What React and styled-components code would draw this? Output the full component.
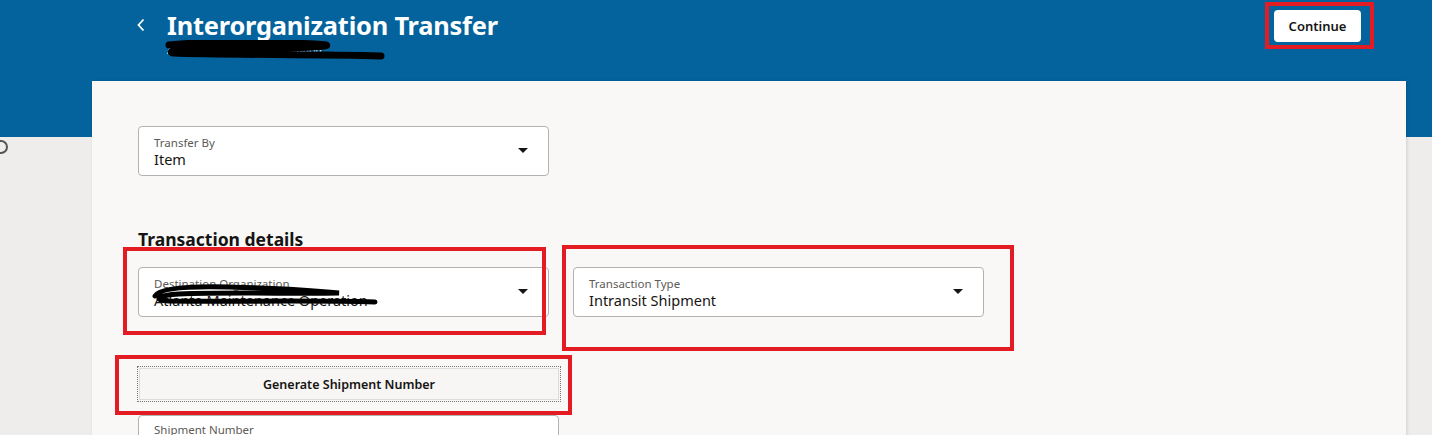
import React from 'react';
import styled, {createGlobalStyle} from 'styled-components';

const GlobalStyle = createGlobalStyle`
  body {
    margin: 0;
    background: #eeedeb;
    font-family: "Noto Sans", "Open Sans", Arial, sans-serif;
    overflow: hidden;
  }
`;

//<editor-fold desc="Styled Components">
const Page = styled.div`
  position: relative;
  width: 1432px;
  height: 435px;
  overflow: hidden;
`;
const Header = styled.header`
  background: #04639c;
  height: 137px;
  display: flex;
  justify-content: space-between;
  align-items: flex-start;
  padding: 10px 71px 0 136px;
  box-sizing: border-box;
`;
const TitleBlock = styled.div`
  display: flex;
  flex-direction: column;
  margin-top: -2px;
`;
const TitleRow = styled.div`
  display: flex;
  align-items: center;
  gap: 18px;
`;
const BackBtn = styled.button`
  background: none;
  border: none;
  padding: 0;
  width: 13px;
  height: 20px;
  display: flex;
  align-items: center;
  cursor: pointer;
`;
const Title = styled.h1`
  margin: 0;
  color: #fff;
  font-size: 25.4px;
  font-weight: 700;
  letter-spacing: -0.2px;
  line-height: 34px;
`;
const Subtitle = styled.div`
  position: relative;
  margin-left: 31px;
  color: #fff;
  font-size: 10.5px;
  line-height: 16px;
  height: 18px;
  width: 220px;
`;
const Scribble = styled.svg`
  position: absolute;
  left: ${p => p.$left || 0}px;
  top: ${p => p.$top || 0}px;
  pointer-events: none;
`;
const Highlight = styled.div`
  position: relative;
  width: fit-content;
  &::after {
    content: "";
    position: absolute;
    top: ${p => p.$t}px;
    left: ${p => p.$l}px;
    right: ${p => p.$r}px;
    bottom: ${p => p.$b}px;
    border: 4px solid #e31c24;
    pointer-events: none;
  }
`;
const ContinueBtn = styled.button`
  display: block;
  width: 87px;
  height: 32px;
  background: #fff;
  border: none;
  border-radius: 4px;
  font-family: inherit;
  font-size: 13px;
  font-weight: 600;
  color: #161513;
`;
const Ring = styled.div`
  position: absolute;
  left: -6px;
  top: 140px;
  width: 10px;
  height: 10px;
  border: 2px solid #555;
  border-radius: 50%;
`;
const Card = styled.main`
  margin: -56px 26px 0 92px;
  background: #f9f8f7;
  box-shadow: 1px 0 3px rgba(0, 0, 0, 0.12);
  padding: 45px 46px 0;
  height: 400px;
  box-sizing: border-box;
`;
const Field = styled.div`
  position: relative;
  width: ${p => p.$w || 411}px;
  height: 50px;
  box-sizing: border-box;
  background: #fff;
  border: 1px solid #b5b3b0;
  border-radius: 4px;
  padding: 8px 15px 0;
  display: flex;
  flex-direction: column;
`;
const ShipmentField = styled(Field)`
  margin-top: 13px;
  padding-top: 6px;
`;
const Label = styled.span`
  font-size: 11.5px;
  color: #5c5a57;
  line-height: 15px;
`;
const Value = styled.span`
  font-size: 14.5px;
  color: #161513;
  line-height: 18px;
`;
const Caret = styled.span`
  position: absolute;
  right: 20px;
  top: 21px;
  width: 0;
  height: 0;
  border-left: 5px solid transparent;
  border-right: 5px solid transparent;
  border-top: 5px solid #161513;
`;
const SectionTitle = styled.h2`
  margin: 52px 0 17px;
  font-size: 17.5px;
  font-weight: 700;
  color: #161513;
  line-height: 22px;
`;
const FieldRow = styled.div`
  display: flex;
  gap: 24px;
`;
const GenerateBtn = styled.button`
  display: block;
  margin: 49px 0 0 -1px;
  width: 424px;
  height: 36px;
  background: #f7f6f4;
  border: 1px dotted #7a7876;
  outline: 1px solid #dedcda;
  outline-offset: -3px;
  font-family: inherit;
  font-size: 12.5px;
  font-weight: 600;
  color: #161513;
`;
//</editor-fold>

const SelectField = ({label, value, width, children}) => (
    <Field $w={width}>
        <Label>{label}</Label>
        <Value>{value}</Value>
        <Caret/>
        {children}
    </Field>
);

const App = () => {
    return (
        <Page>
            <GlobalStyle/>
            <Header>
                <TitleBlock>
                    <TitleRow>
                        <BackBtn aria-label="Back">
                            <svg width="10" height="14" viewBox="0 0 10 14">
                                <path d="M7.5 1.5 L2.5 7 L7.5 12.5" fill="none" stroke="#fff" strokeWidth="1.8"/>
                            </svg>
                        </BackBtn>
                        <Title>Interorganization Transfer</Title>
                    </TitleRow>
                    <Subtitle>
                        Atlanta Maintenance Operation
                        <Scribble $left={-2} $top={-2} width="224" height="24" viewBox="0 0 224 24">
                            <path d="M4 5 C40 1 110 2 150 4 C190 6 120 9 60 9 C20 9 0 11 8 13 C60 15 150 14 216 16"
                                  fill="none" stroke="#000" strokeWidth="7" strokeLinecap="round"/>
                        </Scribble>
                    </Subtitle>
                </TitleBlock>
                <Highlight $t={-8} $l={-9} $r={-13} $b={-7}>
                    <ContinueBtn>Continue</ContinueBtn>
                </Highlight>
            </Header>
            <Ring/>
            <Card>
                <SelectField label="Transfer By" value="Item"/>
                <SectionTitle>Transaction details</SectionTitle>
                <FieldRow>
                    <Highlight $t={-20} $l={-15} $r={3} $b={-18}>
                        <SelectField label="Destination Organization" value="Atlanta Maintenance Operation">
                            <Scribble $left={10} $top={12} width="230" height="28" viewBox="0 0 230 28">
                                <path d="M6 16 C10 8 40 6 80 7 C120 8 160 10 190 13 C150 14 80 12 30 14 C10 15 2 20 20 21 C80 22 160 20 226 22"
                                      fill="none" stroke="#000" strokeWidth="5" strokeLinecap="round"/>
                            </Scribble>
                        </SelectField>
                    </Highlight>
                    <Highlight $t={-22} $l={-11} $r={-30} $b={-34}>
                        <SelectField label="Transaction Type" value="Intransit Shipment"/>
                    </Highlight>
                </FieldRow>
                <Highlight $t={-11} $l={-23} $r={-11} $b={-13}>
                    <GenerateBtn>Generate Shipment Number</GenerateBtn>
                </Highlight>
                <ShipmentField $w={421}>
                    <Label>Shipment Number</Label>
                </ShipmentField>
            </Card>
        </Page>
    );
};

export default App;
